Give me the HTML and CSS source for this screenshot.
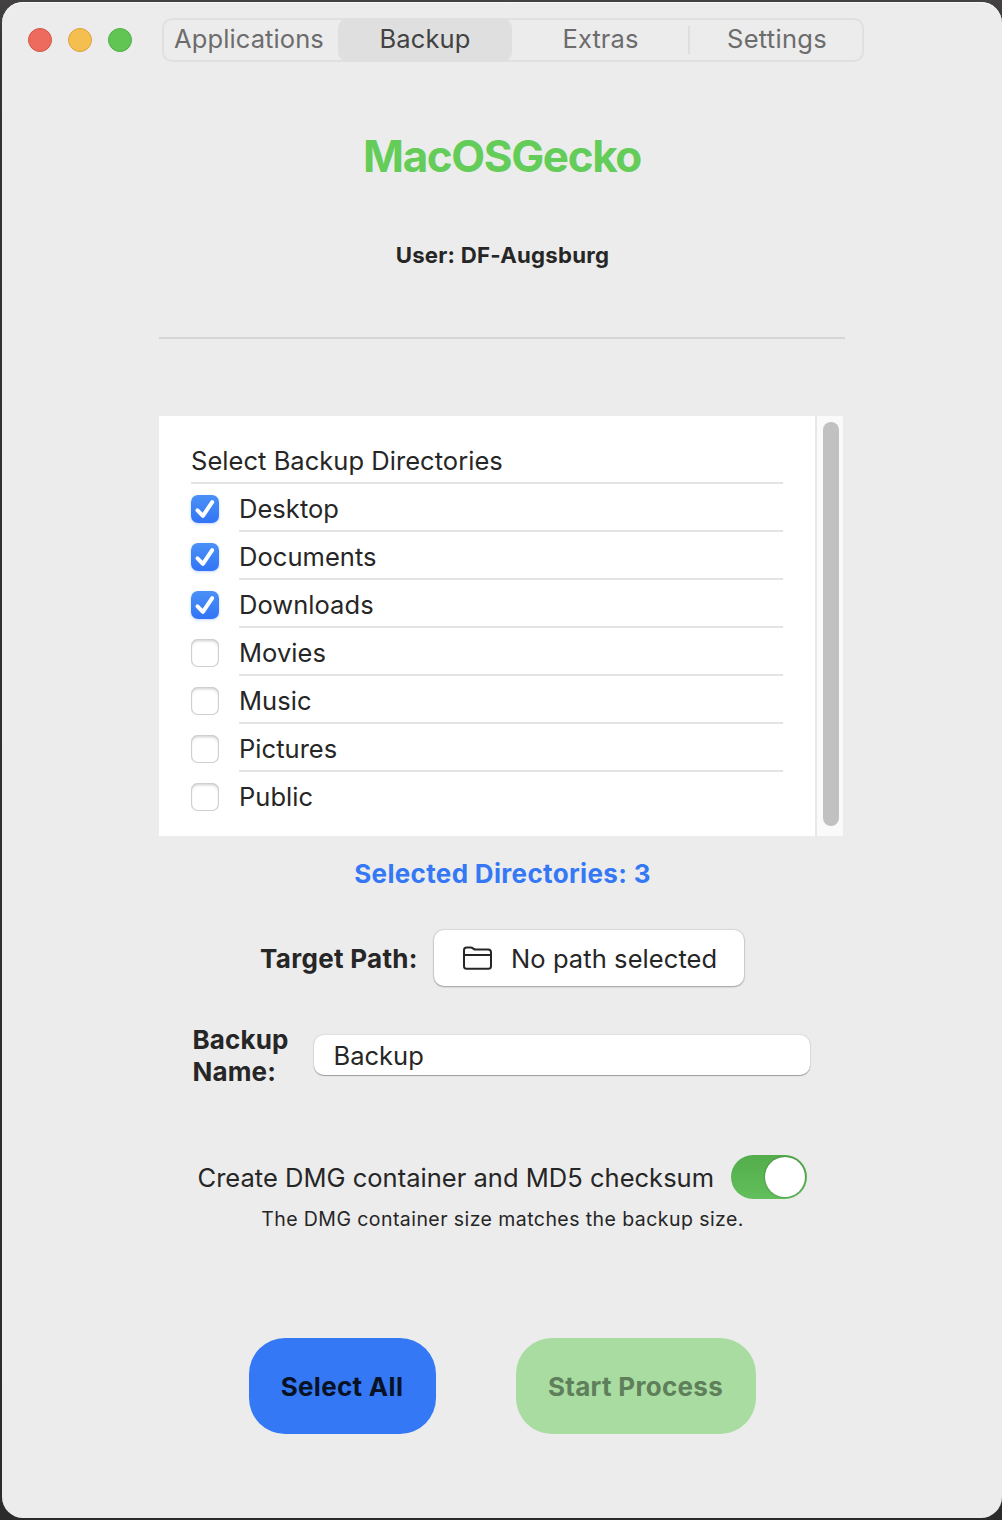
FILE: index.html
```html
<!DOCTYPE html>
<html lang="en">
<head>
<meta charset="utf-8">
<title>MacOSGecko</title>
<link rel="stylesheet" href="styles.css">
</head>
<body>
<div class="window">
  <header class="titlebar">
    <div class="lights">
      <span class="light light-close"></span>
      <span class="light light-min"></span>
      <span class="light light-zoom"></span>
    </div>
    <nav class="tabs">
      <a class="tab tab-apps">Applications</a>
      <a class="tab tab-active">Backup</a>
      <a class="tab tab-extras">Extras</a>
      <span class="tab-divider"></span>
      <a class="tab tab-settings">Settings</a>
    </nav>
  </header>
  <main class="content">
    <h1 class="title">MacOSGecko</h1>
    <p class="user">User: DF-Augsburg</p>
    <hr class="rule">
    <section class="panel">
      <div class="list">
        <div class="list-head">Select Backup Directories</div>
        <label class="row"><span class="check checked"><svg viewBox="0 0 28 28"><path d="M6.5 15.3 11.9 20.8 21.2 7.2"/></svg></span><span class="name">Desktop</span></label>
        <label class="row"><span class="check checked"><svg viewBox="0 0 28 28"><path d="M6.5 15.3 11.9 20.8 21.2 7.2"/></svg></span><span class="name">Documents</span></label>
        <label class="row"><span class="check checked"><svg viewBox="0 0 28 28"><path d="M6.5 15.3 11.9 20.8 21.2 7.2"/></svg></span><span class="name">Downloads</span></label>
        <label class="row"><span class="check"></span><span class="name">Movies</span></label>
        <label class="row"><span class="check"></span><span class="name">Music</span></label>
        <label class="row"><span class="check"></span><span class="name">Pictures</span></label>
        <label class="row"><span class="check"></span><span class="name">Public</span></label>
      </div>
      <div class="scrollbar"><div class="thumb"></div></div>
    </section>
    <p class="count">Selected Directories: 3</p>
    <div class="target">
      <span class="target-label">Target Path:</span>
      <button class="path-button">
        <svg class="folder" viewBox="0 0 29 24"><path d="M1 20.2V4.2Q1 1.6 3.6 1.6H7.6Q9 1.6 10 2.4L10.6 2.9Q11.5 3.6 12.8 3.6H25Q28 3.6 28 6.5V20.2Q28 22.8 25.2 22.8H3.8Q1 22.8 1 20.2ZM1 9H28"/></svg>
        <span>No path selected</span>
      </button>
    </div>
    <div class="backup">
      <span class="backup-label">Backup Name:</span>
      <div class="field">Backup</div>
    </div>
    <div class="dmg">
      <span class="dmg-label">Create DMG container and MD5 checksum</span>
      <span class="switch"><span class="knob"></span></span>
    </div>
    <p class="hint">The DMG container size matches the backup size.</p>
    <div class="actions">
      <button class="action select-all">Select All</button>
      <button class="action start">Start Process</button>
    </div>
  </main>
</div>
</body>
</html>
```
FILE: styles.css
```css
* { box-sizing: border-box; }
body {
  margin: 0;
  width: 1002px;
  height: 1520px;
  padding: 2px 0 2px 2px;
  background: linear-gradient(#434141 0, #343333 60px, #2b2b2b 100%);
  font-family: Inter, "Liberation Sans", sans-serif;
  font-size: 25.5px;
  color: #262626;
  overflow: hidden;
}
h1, p { margin: 0; }
button { border: 0; padding: 0; font: inherit; color: inherit; letter-spacing: inherit; }
.window {
  height: 1516px;
  background: #ececec;
  border-radius: 21px;
  box-shadow: inset 0 1px 0 #f8f8f8;
}
.titlebar { display: flex; align-items: center; height: 76px; padding-left: 26px; }
.lights { display: flex; gap: 16px; width: 134px; }
.light { width: 24px; height: 24px; border-radius: 50%; border: 1px solid; }
.light-close { background: #ec6a5e; border-color: #d55549; }
.light-min { background: #f5bf4f; border-color: #dca43c; }
.light-zoom { background: #61c554; border-color: #4faf43; }
.tabs {
  display: flex;
  align-items: center;
  width: 702px;
  height: 44px;
  border-radius: 10px;
  box-shadow: inset 0 0 0 2px #e0e0e0;
  color: #6c6c6c;
}
.tab { height: 44px; line-height: 41px; text-align: center; white-space: nowrap; letter-spacing: 0.1px; }
.tab-apps { width: 176px; padding-right: 2px; }
.tab-active { width: 174px; background: #dfdfdf; border-radius: 10px; color: #424242; }
.tab-extras { width: 176px; padding-left: 1px; }
.tab-divider { width: 2px; height: 28px; background: #dedede; }
.tab-settings { width: 174px; letter-spacing: 0.3px; }
.content { display: flex; flex-direction: column; align-items: center; padding-top: 51px; }
.title { height: 54px; line-height: 54px; font-size: 44px; font-weight: 700; letter-spacing: -1.4px; color: #64cc58; }
.user { margin-top: 56px; padding-left: 1px; height: 32px; line-height: 32px; font-size: 22.2px; font-weight: 700; letter-spacing: 0.25px; }
.rule { width: 686px; height: 2px; margin: 66px 0 0; border: 0; background: #d6d6d6; }
.panel { display: flex; width: 684px; height: 420px; margin: 77px 2px 0 0; background: #fff; }
.list { width: 656px; padding: 20px 32px 0; letter-spacing: 0.04px; }
.list-head { height: 48px; line-height: 50px; border-bottom: 2px solid #e4e4e4; }
.row { display: flex; align-items: center; gap: 20px; height: 48px; }
.name { flex: 1; height: 48px; line-height: 50px; border-bottom: 2px solid #e4e4e4; }
.row:last-child .name { border-color: transparent; }
.check {
  width: 28px;
  height: 28px;
  margin-top: 2px;
  border-radius: 7px;
  background: #fff;
  box-shadow: inset 0 0 0 1px #cfcfcf, inset 0 2px 3px rgba(0,0,0,.2);
}
.checked { background: linear-gradient(#4a91f7, #3274f6); box-shadow: 0 1px 3px rgba(50,116,246,.3); }
.check svg { display: block; fill: none; stroke: #fff; stroke-width: 4; stroke-linecap: round; stroke-linejoin: round; }
.scrollbar { width: 28px; border-left: 2px solid #e8e8e8; background: #fafafa; padding: 6px; }
.thumb { width: 16px; height: 404px; border-radius: 8px; background: #c1c1c1; }
.count { height: 32px; line-height: 32px; margin-top: 22px; padding-left: 1px; font-size: 26px; font-weight: 700; letter-spacing: 0.33px; color: #3478f6; }
.target { display: flex; align-items: center; justify-content: space-between; width: 484px; margin-top: 40px; }
.target-label { font-size: 26px; font-weight: 700; white-space: nowrap; letter-spacing: 0.3px; }
.path-button {
  display: flex;
  align-items: center;
  width: 310px;
  height: 56px;
  padding-left: 29px;
  gap: 19px;
  border-radius: 10px;
  background: #fff;
  box-shadow: 0 0 1px 1px rgba(0,0,0,.08), 0 1px 2px rgba(0,0,0,.28);
  letter-spacing: 0.08px;
  white-space: nowrap;
}
.folder { width: 29px; height: 24px; fill: none; stroke: #262626; stroke-width: 2; }
.backup { display: flex; align-items: center; width: 619px; margin-top: 38px; }
.backup-label { width: 121px; line-height: 32px; font-size: 26px; font-weight: 700; letter-spacing: 0.15px; }
.field {
  width: 496px;
  height: 40px;
  margin-top: -3px;
  padding-left: 20px;
  line-height: 41px;
  border-radius: 10px;
  background: #fff;
  box-shadow: 0 0 1px 1px rgba(0,0,0,.06), 0 1px 1px rgba(0,0,0,.3);
}
.dmg { display: flex; align-items: center; justify-content: space-between; width: 609px; height: 44px; margin-top: 67px; }
.dmg-label { white-space: nowrap; letter-spacing: 0.02px; }
.switch {
  display: flex;
  justify-content: flex-end;
  width: 76px;
  height: 44px;
  padding: 2px;
  border-radius: 22px;
  background: linear-gradient(#52ad4a, #62bf5c);
}
.knob { width: 40px; height: 40px; border-radius: 50%; background: #fff; box-shadow: 0 0 2px rgba(0,0,0,.4); }
.hint { height: 26px; line-height: 26px; margin-top: 7px; padding-left: 1px; font-size: 19.5px; letter-spacing: 0.43px; }
.actions { display: flex; gap: 80px; margin-top: 106px; }
.action { height: 96px; border-radius: 36px; font-size: 26px; font-weight: 700; letter-spacing: 0.3px; }
.select-all { width: 187px; background: #3478f6; color: #071224; }
.start { width: 240px; background: #a8dca1; color: #5f7f5b; }
```
